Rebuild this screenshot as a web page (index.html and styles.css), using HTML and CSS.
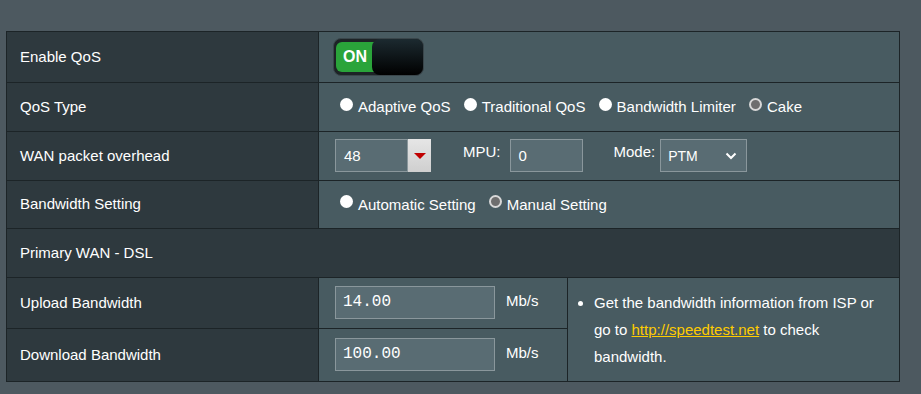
FILE: index.html
```html
<!DOCTYPE html>
<html>
<head>
<meta charset="UTF-8">
<title>QoS</title>
<link rel="stylesheet" href="styles.css">
</head>
<body>
<table class="qos">
    <tr class="r1">
        <th>Enable QoS</th>
        <td colspan="2">
            <div class="toggle"><span class="on">ON</span><span class="knob"></span></div>
        </td>
    </tr>
    <tr class="r2">
        <th>QoS Type</th>
        <td colspan="2">
            <label class="opt"><span class="radio"></span>Adaptive QoS</label>
            <label class="opt"><span class="radio"></span>Traditional QoS</label>
            <label class="opt"><span class="radio"></span>Bandwidth Limiter</label>
            <label class="opt"><span class="radio checked"></span>Cake</label>
        </td>
    </tr>
    <tr class="r3">
        <th>WAN packet overhead</th>
        <td colspan="2">
            <div class="line">
                <div class="combo"><span class="field small">48</span><span class="drop"></span></div>
                <span class="lbl mpu">MPU:</span>
                <span class="field mpuin">0</span>
                <span class="lbl mode">Mode:</span>
                <div class="select">PTM
                    <svg width="12" height="8" viewBox="0 0 12 8"><path d="M1.5 1.5 L6 6 L10.5 1.5" fill="none" stroke="#fff" stroke-width="2"/></svg>
                </div>
            </div>
        </td>
    </tr>
    <tr class="r4">
        <th>Bandwidth Setting</th>
        <td colspan="2">
            <label class="opt"><span class="radio"></span>Automatic Setting</label>
            <label class="opt"><span class="radio checked"></span>Manual Setting</label>
        </td>
    </tr>
    <tr class="r5">
        <th colspan="3" class="head">Primary WAN - DSL</th>
    </tr>
    <tr class="r6">
        <th>Upload Bandwidth</th>
        <td class="bw"><span class="field mono">14.00</span><span class="unit">Mb/s</span></td>
        <td rowspan="2" class="info">
            <ul>
                <li>Get the bandwidth information from ISP or go to <a href="#">http://speedtest.net</a> to check bandwidth.</li>
            </ul>
        </td>
    </tr>
    <tr class="r7">
        <th>Download Bandwidth</th>
        <td class="bw"><span class="field mono">100.00</span><span class="unit">Mb/s</span></td>
    </tr>
</table>
</body>
</html>
```

FILE: styles.css
```css
body{
    margin:0;
    background:#4d5960;
    font-family:"Liberation Sans",Arial,sans-serif;
    font-size:15px;
    color:#fff;
}
table.qos{
    margin:31px 0 0 6px;
    width:894px;
    border-collapse:collapse;
    border:1px solid #1c2427;
}
table.qos th,
table.qos td{
    border:1px solid #1c2427;
    padding:0 0 2px;
}
table.qos th{
    width:298px;
    padding-left:13px;
    text-align:left;
    font-weight:normal;
    background:#2e393e;
}
table.qos td{
    background:#485b61;
    padding-left:16px;
}
table.qos th.head{
    background:#2e393e;
}
tr.r1{height:51px;}
tr.r2{height:49px;}
tr.r3{height:49px;}
tr.r4{height:48px;}
tr.r5{height:49px;}
tr.r6{height:51px;}
tr.r7{height:53px;}

.toggle{
    position:relative;
    width:89px;
    height:36px;
    border:1px solid #3a464b;
    border-radius:8px;
    background:#1d2326;
    margin:1px 0 0 -2px;
}
.toggle .on{
    position:absolute;
    left:2px;
    top:3px;
    width:46px;
    height:30px;
    border-radius:6px 0 0 6px;
    background:#2aa43a;
    font-weight:bold;
    font-size:16px;
    line-height:30px;
    text-indent:7px;
}
.toggle .knob{
    position:absolute;
    left:38px;
    top:0;
    width:51px;
    height:36px;
    border-radius:8px;
    background:linear-gradient(#1c2a30,#000);
}

.opt{
    display:inline-flex;
    align-items:center;
    margin-right:4px;
    padding-left:5px;
}
.radio{
    display:inline-block;
    width:13px;
    height:13px;
    border-radius:50%;
    background:#fff;
    margin:-5px 5px 0 0;
    box-sizing:border-box;
}
.radio.checked{
    background:#6e6e6e;
    border:2px solid #d8d8d8;
}

.line{
    display:flex;
    align-items:center;
}
.field{
    display:inline-block;
    box-sizing:border-box;
    height:33px;
    line-height:31px;
    padding-left:8px;
    background:#596c73;
    border:1px solid #8a979c;
    color:#fff;
}
.combo{display:flex;}
.field.small{width:73px;}
.drop{
    position:relative;
    width:23px;
    height:33px;
    background:linear-gradient(#e6e6e6,#cfcfcf);
}
.drop::after{
    content:"";
    position:absolute;
    left:6px;
    top:14px;
    border-left:6px solid transparent;
    border-right:6px solid transparent;
    border-top:6px solid #c00000;
}
.lbl{margin-top:-8px;}
.lbl.mpu{margin-left:32px;margin-right:9px;}
.field.mpuin{width:73px;}
.lbl.mode{margin-left:31px;margin-right:5px;}
.select{
    display:flex;
    align-items:center;
    justify-content:space-between;
    box-sizing:border-box;
    width:87px;
    height:33px;
    padding:2px 9px 0 7px;
    background:#596c73;
    border:1px solid #8a979c;
    font-size:14px;
}

td.bw{
    width:232px;
}
.field.mono{
    width:160px;
    font-family:"Liberation Mono","Courier New",monospace;
    font-size:16px;
    padding-left:7px;
}
.unit{margin-left:11px;}

table.qos td.info{
    padding:0;
    vertical-align:top;
}
td.info ul{
    margin:11px 0 0;
    padding:0 0 0 26px;
    line-height:27px;
    width:290px;
}
td.info a{color:#ffcc00;}
```
